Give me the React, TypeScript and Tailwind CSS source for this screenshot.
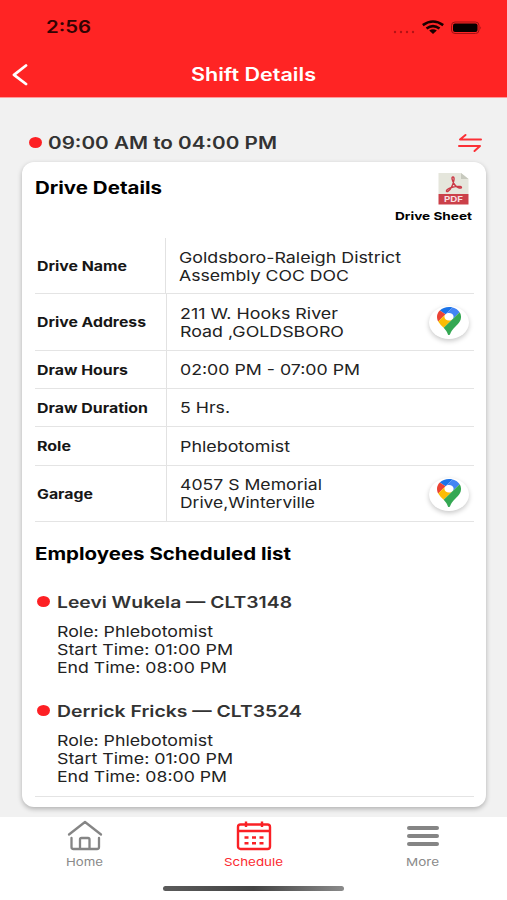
import { useLayoutEffect, useRef, useState, type ReactNode } from "react";

/** A single line of text set wide so that it fills the given width. */
function WideText({ w, className = "", children }: { w: number; className?: string; children: ReactNode }) {
  const ref = useRef<HTMLSpanElement>(null);
  const [scale, setScale] = useState(1.2);
  useLayoutEffect(() => {
    if (ref.current && ref.current.offsetWidth) {
      setScale(w / ref.current.getBoundingClientRect().width * scale);
    }
  }, [w]);
  return (
    <span className={`block shrink-0 ${className}`} style={{ width: w }}>
      <span ref={ref} className="block w-max origin-left whitespace-nowrap" style={{ transform: `scaleX(${scale})` }}>
        {children}
      </span>
    </span>
  );
}

function Dot() {
  return <span className="h-[11px] w-[13px] shrink-0 rounded-[50%] bg-[#fd2024]" />;
}

function MapButton() {
  return (
    <span className="flex h-[33px] w-10 shrink-0 items-center justify-center rounded-[50%] bg-white shadow-[0_2px_5px_rgba(0,0,0,0.22)]">
      <svg className="-mt-[3px] h-7 w-6" viewBox="0 0 92.3 132.3" preserveAspectRatio="none">
        <path fill="#1a73e8" d="M60.2 2.2C55.8.8 51 0 46.1 0 32 0 19.3 6.4 10.8 16.5l21.8 18.3L60.2 2.2z" />
        <path fill="#ea4335" d="M10.8 16.5C4.1 24.5 0 34.9 0 46.1c0 8.7 1.7 15.7 4.6 22l28-33.3-21.8-18.3z" />
        <path fill="#4285f4" d="M46.2 28.5c9.8 0 17.7 7.9 17.7 17.7 0 4.3-1.6 8.3-4.2 11.4 0 0 13.9-16.6 27.5-32.7-5.6-10.8-15.3-19-27-22.7L32.6 34.8c3.3-3.8 8.1-6.3 13.6-6.3" />
        <path fill="#fbbc04" d="M46.2 63.8c-9.8 0-17.7-7.9-17.7-17.7 0-4.3 1.5-8.3 4.1-11.3l-28 33.3c4.8 10.6 12.8 19.2 21 29.9l34.1-40.5c-3.3 3.9-8.1 6.3-13.5 6.3" />
        <path fill="#34a853" d="M59.1 109.2c15.4-24.1 33.3-35 33.3-63 0-7.7-1.9-14.9-5.2-21.3L25.6 98c2.6 3.4 5.3 7.3 7.9 11.3 9.4 14.5 6.8 23.1 12.8 23.1s3.4-8.7 12.8-23.2" />
      </svg>
    </span>
  );
}

type Line = { text: string; w: number };
const rows: { label: Line; lines: Line[]; height: string; map?: boolean; first?: boolean }[] = [
  { label: { text: "Drive Name", w: 90 }, lines: [{ text: "Goldsboro-Raleigh District", w: 222 }, { text: "Assembly COC DOC", w: 170 }], height: "h-14", first: true },
  { label: { text: "Drive Address", w: 109 }, lines: [{ text: "211 W. Hooks River", w: 158 }, { text: "Road ,GOLDSBORO", w: 164 }], height: "h-[57px]", map: true },
  { label: { text: "Draw Hours", w: 91 }, lines: [{ text: "02:00 PM - 07:00 PM", w: 180 }], height: "h-[38px]" },
  { label: { text: "Draw Duration", w: 111 }, lines: [{ text: "5 Hrs.", w: 50 }], height: "h-[38px]" },
  { label: { text: "Role", w: 34 }, lines: [{ text: "Phlebotomist", w: 110 }], height: "h-[39px]" },
  { label: { text: "Garage", w: 56 }, lines: [{ text: "4057 S Memorial", w: 142 }, { text: "Drive,Winterville", w: 135 }], height: "h-14", map: true },
];

const employees = [
  { name: "Leevi Wukela — CLT3148", w: 235, box: "h-[109px]" },
  { name: "Derrick Fricks — CLT3524", w: 245, box: "h-[107px] border-b border-[#e4e4e4]" },
];

export default function App() {
  return (
    <div className="flex h-[900px] w-[507px] flex-col overflow-hidden bg-[#f1f1f1] font-['Inter','Liberation_Sans',sans-serif]">
      <header className="h-[98px] shrink-0 border-b border-[#ff9a9a] bg-[#ff2424]">
        <div className="flex h-[55px] items-center justify-between pl-[46px] pr-[25px]">
          <WideText w={45} className="pt-px text-[17px] font-semibold text-[#330303]">2:56</WideText>
          <svg className="h-[22px] w-[90px]" viewBox="0 0 90 22">
            <g fill="#b51316">
              <circle cx="3" cy="15" r="1.2" /><circle cx="9" cy="15" r="1.2" /><circle cx="15" cy="15" r="1.2" /><circle cx="21" cy="15" r="1.2" />
            </g>
            <g fill="none" stroke="#190000" strokeWidth="2.6">
              <path d="M30.8 8.1Q41 .9 51.2 8.1" />
              <path d="M34.5 11.5Q41 6.6 47.5 11.5" />
            </g>
            <path fill="#190000" d="M37.2 13.5Q41 11 44.8 13.5L41 17z" />
            <rect x="59.5" y="5" width="27.5" height="11.5" rx="3.5" fill="none" stroke="#a01013" />
            <rect x="61" y="6.5" width="24.5" height="8.5" rx="2" fill="#080000" />
            <path fill="#a01013" d="M88.3 9.2q1.7 1.6 0 3.2z" />
          </svg>
        </div>
        <div className="grid h-[39px] grid-cols-[192px_1fr_192px] items-center pl-[11px]">
          <svg className="h-[22px] w-[18px]" viewBox="0 0 18 22">
            <path d="M15 1.5L3 10.8l12 9.2" fill="none" stroke="#fff" strokeWidth="2.8" strokeLinecap="round" strokeLinejoin="round" />
          </svg>
          <WideText w={125} className="-ml-3 text-lg font-semibold text-white">Shift Details</WideText>
        </div>
      </header>

      <main className="flex h-[719px] shrink-0 flex-col pl-[22px] pr-[21.5px]">
        <div className="mt-[26px] flex h-[38px] items-center pb-0.5 pl-[7px] pr-1">
          <Dot />
          <WideText w={229} className="ml-1.5 pt-[3px] text-[17px] font-semibold text-[#333]">09:00 AM to 04:00 PM</WideText>
          <svg className="ml-auto mt-0.5 h-5 w-6" viewBox="0 0 24 20">
            <path d="M23 6.5H2L7.5 2M1 13H22L16.5 18" fill="none" stroke="#fb3036" strokeWidth="2" strokeLinecap="round" strokeLinejoin="round" />
          </svg>
        </div>

        <section className="h-[645px] rounded-xl bg-white pl-[13px] pr-3 shadow-[0_2px_5px_rgba(0,0,0,0.27)]">
          <div className="flex h-[76px] justify-between">
            <WideText w={127} className="pt-[14px] text-[17px] leading-6 font-bold text-black">Drive Details</WideText>
            <div className="flex flex-col items-end pt-2.5 pr-0.5">
              <svg className="mr-[3px] h-[33px] w-[31px]" viewBox="0 0 31 33">
                <path fill="#e5e6dc" d="M.5 1H23l7.5 6V22H.5z" />
                <path fill="#c7c9be" d="M23 1v6h7.5z" />
                <path fill="#cb4049" d="M.5 22h30v10.5H.5z" />
                <path fill="none" stroke="#cb3946" strokeWidth="1.4" d="M15.2 5c-2.4-.3-.8 4.3 1.3 7.5 2 3 5.5 4.1 6.8 3.3 1-1.2-2.3-1.8-6-1.2-4.5.7-8.6 2.7-8.9 4.3-.1 1.7 3.2.4 5.2-3.9 1.9-3.9 3.5-9.7 1.6-10z" />
                <text x="15.5" y="30.2" textAnchor="middle" textLength="19" lengthAdjust="spacingAndGlyphs" className="fill-[#f8dfe0] text-[8px] font-bold">PDF</text>
              </svg>
              <WideText w={77} className="mt-0.5 text-[11px] leading-[18px] font-bold text-black">Drive Sheet</WideText>
            </div>
          </div>

          <div>
            {rows.map((row) => (
              <div key={row.label.text} className={`flex border-b border-[#e4e4e4] ${row.height}`}>
                <div className={`flex shrink-0 items-center border-r border-[#e2e2e2] pt-0.5 pl-[1.5px] ${row.first ? "w-[131px]" : "w-[132px]"}`}>
                  <WideText w={row.label.w} className="text-[13px] font-bold text-[#161616]">{row.label.text}</WideText>
                </div>
                <div className={`flex flex-1 flex-col justify-center ${row.first ? "pt-0.5 pl-[12.5px]" : "pt-px pl-[13px]"}`}>
                  {row.lines.map((line) => (
                    <WideText key={line.text} w={line.w} className="text-[15px] leading-[18px] text-[#222]">{line.text}</WideText>
                  ))}
                </div>
                {row.map && <div className="flex items-center pt-px pr-[4.5px]"><MapButton /></div>}
              </div>
            ))}
          </div>

          <WideText w={256} className="mt-5 text-[17px] leading-6 font-bold text-black">Employees Scheduled list</WideText>
          <div className="mt-[15px]">
            {employees.map((e) => (
              <div key={e.name} className={`pt-2 pl-0.5 ${e.box}`}>
                <div className="flex h-6 items-center">
                  <Dot />
                  <WideText w={e.w} className="ml-[6.5px] pt-0.5 text-base font-semibold text-[#333]">{e.name}</WideText>
                </div>
                <div className="mt-2.5 pl-[19.5px] text-[15px] leading-[18px] text-[#222]">
                  <WideText w={156}>Role: Phlebotomist</WideText>
                  <WideText w={176}>Start Time: 01:00 PM</WideText>
                  <WideText w={170}>End Time: 08:00 PM</WideText>
                </div>
              </div>
            ))}
          </div>
        </section>
      </main>

      <nav className="flex h-[83px] shrink-0 flex-col items-center bg-white">
        <div className="grid h-[65px] w-full grid-cols-3 text-[11px] leading-[18px] text-[#8a8a8a]">
          <div className="flex flex-col items-center">
            <svg className="mt-0.5 h-[34px] w-9" viewBox="0 0 36 34">
              <path d="M2 15.5L18 3 34 15.5M4.5 19v9q0 2 2 2H30q2 0 2-2V19M13 29.5V20.5q0-1.5 1.5-1.5h6.5q1.5 0 1.5 1.5v9" fill="none" stroke="#858585" strokeWidth="2.3" strokeLinecap="round" strokeLinejoin="round" />
            </svg>
            <WideText w={37}>Home</WideText>
          </div>
          <div className="flex flex-col items-center text-[#fb2a30]">
            <svg className="mt-0.5 h-[34px] w-9" viewBox="0 0 36 34">
              <g fill="none" stroke="#fa2025" strokeWidth="2.4">
                <rect x="2" y="5.5" width="32" height="24.5" rx="2.5" />
                <path d="M2 12h32M10 2.5v5.5M26 2.5v5.5" />
                <path d="M8.5 18.5h4M16 18.5h4M23.5 18.5h4M8.5 24.3h4M16 24.3h4M23.5 24.3h4" />
              </g>
            </svg>
            <WideText w={59}>Schedule</WideText>
          </div>
          <div className="flex flex-col items-center">
            <div className="mt-[9px] mb-[7px] flex h-5 flex-col justify-between">
              <span className="h-1 w-8 rounded-sm bg-[#858585]" />
              <span className="h-1 w-8 rounded-sm bg-[#858585]" />
              <span className="h-1 w-8 rounded-sm bg-[#858585]" />
            </div>
            <WideText w={33}>More</WideText>
          </div>
        </div>
        <span className="mt-1 h-[5px] w-[181px] rounded-full bg-linear-to-r from-[#5b5b5b] via-[#444] to-[#8b8b8b]" />
      </nav>
    </div>
  );
}
